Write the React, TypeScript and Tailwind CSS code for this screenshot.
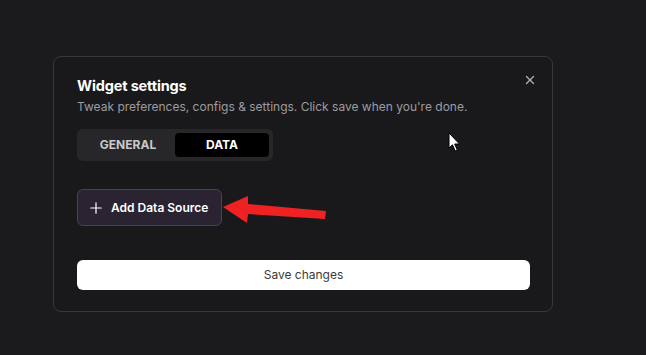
import React, { useState } from "react";
import { X, Plus } from "lucide-react";

const TABS = ["GENERAL", "DATA"];

export default function App() {
  const [activeTab, setActiveTab] = useState("DATA");

  return (
    <div className="relative w-[646px] h-[355px] bg-[#1b1b1d] pl-[53px] pt-[56px] font-['Inter','Liberation_Sans',sans-serif] overflow-hidden">
      {/* Dialog */}
      <div className="relative w-[500px] rounded-lg border border-[#38383b] bg-[#19191b] pl-[23px] pr-[22px] pt-[19px] pb-[21px]">
        <button className="absolute right-[15px] top-[16px] text-[#b4b4b8]">
          <X size={14} strokeWidth={2.2} />
        </button>

        <h2 className="text-[14.5px] leading-5 font-bold text-white tracking-[-0.01em]">Widget settings</h2>
        <p className="mt-[2px] text-[12px] leading-[18px] text-[#9c9ca2]">
          Tweak preferences, configs &amp; settings. Click save when you're done.
        </p>

        {/* Tabs */}
        <div className="mt-[13px] inline-flex rounded-md bg-[#27272a] p-1">
          {TABS.map((tab) => {
            const isActive = activeTab === tab;
            return (
              <button
                key={tab}
                onClick={() => setActiveTab(tab)}
                className={`h-[24px] w-[94px] rounded text-[12px] font-bold ${
                  isActive ? "bg-black text-white" : "text-[#c9c9cd]"
                }`}
              >
                {tab}
              </button>
            );
          })}
        </div>

        {/* Add data source */}
        <div className="mt-[28px] flex">
          <button className="flex h-[37px] items-center gap-[6px] rounded-md border border-[#4a4152] bg-[#2a2331] pl-[9px] pr-[13px] text-[12px] font-semibold text-white">
            <Plus size={18} strokeWidth={1.6} />
            Add Data Source
          </button>
        </div>

        <button className="mt-[34px] h-[30px] w-full rounded-md bg-white text-[12px] text-[#3a3a3c]">
          Save changes
        </button>
      </div>

      {/* Red annotation arrow */}
      <svg className="absolute left-0 top-0 pointer-events-none" width="646" height="355">
        <polygon
          points="223,207 248,196 248,204 326,211 325,219 248,214 247,223"
          fill="#ee2222"
        />
      </svg>

      {/* Mouse cursor */}
      <svg className="absolute left-[448px] top-[132px] pointer-events-none" width="14" height="22" viewBox="0 0 14 22">
        <path d="M1 1 L1 16 L4.5 12.8 L7.2 19 L9.3 18 L6.7 12 L11.5 12 Z" fill="white" stroke="black" strokeWidth="1" />
      </svg>
    </div>
  );
}
